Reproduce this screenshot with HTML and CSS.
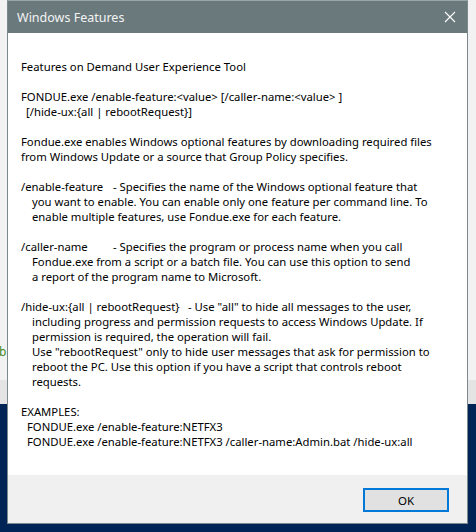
FILE: index.html
```html
<!DOCTYPE html>
<html>
<head>
<meta charset="utf-8">
<link rel="stylesheet" href="styles.css">
</head>
<body>
<div class="desktop">
  <span class="behind-b">b</span>
  <div class="dialog">
    <div class="titlebar">
      <span class="title">Windows Features</span>
      <span class="close" aria-label="Close">
        <svg width="12" height="12" viewBox="0 0 12 12"><path d="M1 1 L11 11 M11 1 L1 11" stroke="#ffffff" stroke-width="1.1" fill="none"/></svg>
      </span>
    </div>
    <div class="content">
      <div class="line">Features on Demand User Experience Tool</div>
      <div class="blank"></div>
      <div class="line">FONDUE.exe /enable-feature:&lt;value&gt; [/caller-name:&lt;value&gt; ]</div>
      <div class="line ind-s">[/hide-ux:{all | rebootRequest}]</div>
      <div class="blank"></div>
      <div class="line">Fondue.exe enables Windows optional features by downloading required files</div>
      <div class="line">from Windows Update or a source that Group Policy specifies.</div>
      <div class="blank"></div>
      <div class="line"><span class="opt">/enable-feature</span>- Specifies the name of the Windows optional feature that</div>
      <div class="line ind">you want to enable. You can enable only one feature per command line. To</div>
      <div class="line ind">enable multiple features, use Fondue.exe for each feature.</div>
      <div class="blank"></div>
      <div class="line"><span class="opt">/caller-name</span>- Specifies the program or process name when you call</div>
      <div class="line ind">Fondue.exe from a script or a batch file. You can use this option to send</div>
      <div class="line ind">a report of the program name to Microsoft.</div>
      <div class="blank"></div>
      <div class="line"><span class="opt opt-wide">/hide-ux:{all | rebootRequest}</span>- Use "all" to hide all messages to the user,</div>
      <div class="line ind">including progress and permission requests to access Windows Update. If</div>
      <div class="line ind">permission is required, the operation will fail.</div>
      <div class="line ind">Use "rebootRequest" only to hide user messages that ask for permission to</div>
      <div class="line ind">reboot the PC. Use this option if you have a script that controls reboot</div>
      <div class="line ind">requests.</div>
      <div class="blank"></div>
      <div class="line">EXAMPLES:</div>
      <div class="line ind-e">FONDUE.exe /enable-feature:NETFX3</div>
      <div class="line ind-e">FONDUE.exe /enable-feature:NETFX3 /caller-name:Admin.bat /hide-ux:all</div>
    </div>
    <div class="footer">
      <button class="ok">OK</button>
    </div>
  </div>
</div>
</body>
</html>
```
FILE: styles.css
```css
html, body {
  margin: 0;
  padding: 0;
}
body {
  width: 476px;
  height: 532px;
  overflow: hidden;
  background: linear-gradient(to bottom, #f2f2f2 0, #f2f2f2 380px, #e4e4e4 380px, #e4e4e4 404px, #012456 404px);
  font-family: "Noto Sans", "Open Sans", sans-serif;
}
.desktop {
  position: relative;
  padding-left: 7px;
}
.behind-b {
  position: absolute;
  left: -1px;
  top: 343px;
  font-size: 12px;
  color: #3f8a1c;
  font-family: "Noto Sans", sans-serif;
}
.dialog {
  width: 459px;
  height: 522px;
  border: 1px solid #7b898c;
  border-top: 1px solid #9aa5a8;
  display: flex;
  flex-direction: column;
  background: #ffffff;
}
.titlebar {
  height: 32px;
  background: #6a797c;
  display: flex;
  align-items: center;
  justify-content: space-between;
  padding: 1px 11px 0 9px;
  box-sizing: border-box;
}
.title {
  color: #f4f4f4;
  font-size: 12.5px;
}
.close {
  display: flex;
  width: 12px;
  height: 12px;
  margin-top: -2px;
}
.content {
  flex: 1;
  padding: 26px 0 0 13px;
  font-size: 11.3px;
  line-height: 15px;
  color: #000;
}
.line {
  white-space: nowrap;
  height: 15px;
}
.blank {
  height: 15px;
}
.ind { padding-left: 11px; }
.ind-s { padding-left: 5px; }
.ind-e { padding-left: 6px; }
.opt {
  display: inline-block;
  width: 92px;
}
.opt-wide { width: 167px; }
.footer {
  height: 48px;
  background: #f0f0f0;
  display: flex;
  justify-content: flex-end;
  align-items: flex-start;
  padding: 13px 18px 0 0;
  box-sizing: border-box;
}
.ok {
  width: 86px;
  height: 24px;
  box-sizing: border-box;
  border: 2px solid #0078d7;
  background: #e1e1e1;
  font-family: "Noto Sans", sans-serif;
  font-size: 11.5px;
  color: #000;
  padding: 0;
}
```
